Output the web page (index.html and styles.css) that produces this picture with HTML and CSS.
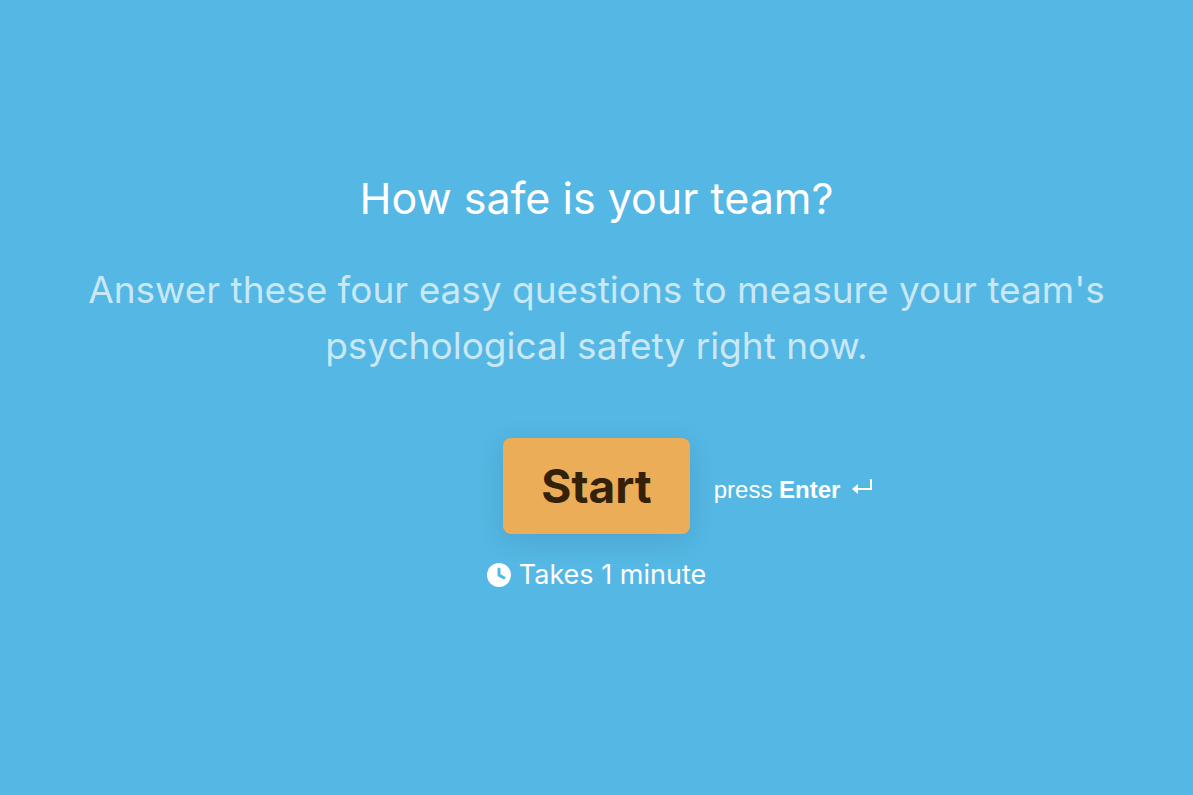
FILE: index.html
```html
<!DOCTYPE html>
<html lang="en">
<head>
<meta charset="utf-8">
<meta name="viewport" content="width=device-width, initial-scale=1">
<title>How safe is your team?</title>
<link rel="stylesheet" href="styles.css">
</head>
<body>
<main class="welcome">
  <h1 class="title">How safe is your team?</h1>
  <p class="description">Answer these four easy questions to measure your team's psychological safety right now.</p>
  <div class="actions">
    <button class="start" type="button">Start</button>
    <div class="hint">
      <span>press <strong>Enter</strong></span>
      <svg class="return" viewBox="0 0 20 20" aria-hidden="true"><path d="M19 1v10H5" fill="none" stroke="currentColor" stroke-width="2"/><path d="M0 11l6-5v10z" fill="currentColor"/></svg>
    </div>
  </div>
  <p class="duration">
    <svg class="clock" viewBox="0 0 24 24" aria-hidden="true"><circle cx="12" cy="12" r="12" fill="currentColor"/><path class="hands" d="M12 6v6.2l5 2.6"/></svg>
    Takes 1 minute
  </p>
</main>
</body>
</html>
```
FILE: styles.css
```css
* { box-sizing: border-box; }
body {
  margin: 0;
  background: #54b7e4;
  color: #fff;
  font-family: Inter, "Liberation Sans", sans-serif;
}
.welcome {
  min-height: 100vh;
  padding: 0 80px 38px;
  display: flex;
  flex-direction: column;
  align-items: center;
  justify-content: center;
  text-align: center;
}
.title { margin: 0; font-size: 43px; line-height: 64px; font-weight: 400; }
.description {
  margin: 32px 0 0;
  font-size: 37px;
  line-height: 56px;
  color: rgba(255, 255, 255, 0.7);
}
.actions {
  width: 100%;
  margin-top: 64px;
  display: grid;
  grid-template-columns: 1fr auto 1fr;
  align-items: center;
  column-gap: 24px;
}
.start {
  grid-column: 2;
  padding: 16px 38px;
  border: 0;
  border-radius: 8px;
  background: #ebad57;
  color: #33210a;
  font: inherit;
  font-size: 46px;
  line-height: 64px;
  font-weight: 700;
  box-shadow: 0 6px 28px rgba(0, 0, 0, 0.1);
  cursor: pointer;
}
.hint {
  display: flex;
  align-items: center;
  gap: 12px;
  padding-top: 8px;
  font-family: "Liberation Sans", Arial, sans-serif;
  font-size: 24px;
  line-height: 32px;
}
.return { width: 20px; height: 20px; margin-bottom: 4px; }
.duration {
  margin: 24px 0 0;
  display: flex;
  align-items: center;
  gap: 8px;
  font-size: 27px;
  line-height: 34px;
}
.clock { width: 24px; height: 24px; }
.hands { fill: none; stroke: #54b7e4; stroke-width: 3; stroke-linecap: round; stroke-linejoin: round; }
```
